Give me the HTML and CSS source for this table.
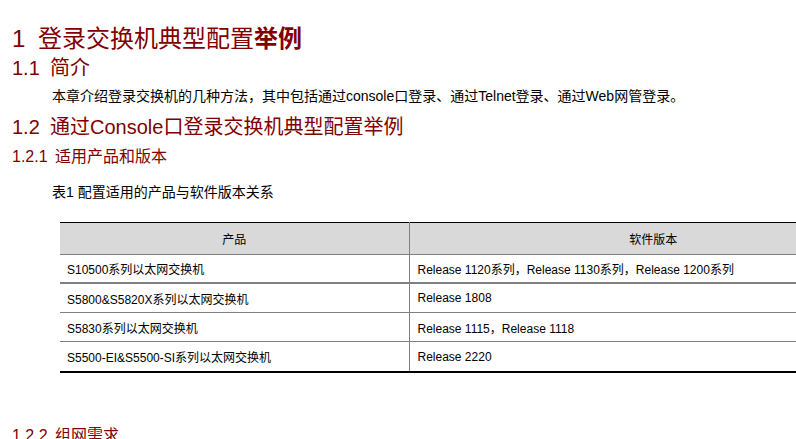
FILE: index.html
```html
<!DOCTYPE html>
<html lang="zh">
<head>
<meta charset="utf-8">
<link rel="stylesheet" href="styles.css">
</head>
<body>
<div class="page">
  <h1 class="h1"><span class="num1">1</span>登录交换机典型配置<b>举例</b></h1>
  <h2 class="h2"><span class="num2">1.1</span>简介</h2>
  <p class="para">本章介绍登录交换机的几种方法，其中包括通过console口登录、通过Telnet登录、通过Web网管登录。</p>
  <h2 class="h2 h2b"><span class="num2b">1.2</span>通过Console口登录交换机典型配置举例</h2>
  <h3 class="h3"><span class="num3">1.2.1</span>适用产品和版本</h3>
  <p class="caption">表1 配置适用的产品与软件版本关系</p>
  <table class="tbl">
    <colgroup><col class="c1"><col class="c2"></colgroup>
    <thead>
      <tr><th>产品</th><th>软件版本</th></tr>
    </thead>
    <tbody>
      <tr class="first"><td>S10500系列以太网交换机</td><td>Release 1120系列，Release 1130系列，Release 1200系列</td></tr>
      <tr><td>S5800&amp;S5820X系列以太网交换机</td><td>Release 1808</td></tr>
      <tr><td>S5830系列以太网交换机</td><td>Release 1115，Release 1118</td></tr>
      <tr class="last"><td>S5500-EI&amp;S5500-SI系列以太网交换机</td><td>Release 2220</td></tr>
    </tbody>
  </table>
  <h3 class="h3 h3b"><span class="num3">1.2.2</span>组网需求</h3>
</div>
</body>
</html>
```

FILE: styles.css
```css
html, body {
  margin: 0;
  padding: 0;
  background: #fff;
  overflow: hidden;
}
body {
  font-family: "Liberation Sans", "Noto Sans CJK SC", sans-serif;
  color: #000;
  width: 796px;
  height: 439px;
}
.page {
  padding-left: 12px;
  overflow: hidden;
  height: 439px;
}
.h1, .h2, .h3 {
  color: #800000;
  font-weight: normal;
  margin: 0;
  white-space: nowrap;
}
.h1 {
  font-size: 24px;
  line-height: 30px;
  padding-top: 24px;
}
.h1 b { font-weight: bold; }
.num1 { display: inline-block; width: 26px; }
.h2 {
  font-size: 20px;
  line-height: 26px;
  margin-top: 1px;
}
.h2b { margin-top: 8px; }
.num2 { display: inline-block; width: 38px; }
.num2b { display: inline-block; width: 38px; }
.para {
  margin: 5px 0 0 40px;
  font-size: 14px;
  line-height: 20px;
  white-space: nowrap;
}
.h3 {
  font-size: 16px;
  line-height: 22px;
  margin-top: 6px;
}
.num3 { display: inline-block; width: 43px; }
.caption {
  margin: 14px 0 0 40px;
  font-size: 14px;
  line-height: 20px;
}
.tbl {
  margin: 20px 0 0 48px;
  border-collapse: collapse;
  table-layout: fixed;
  width: 837px;
  font-size: 12px;
  border-top: 1px solid #000;
  border-bottom: 2px solid #000;
}
.c1 { width: 349px; }
.c2 { width: 488px; }
.tbl th {
  background: #d9d9d9;
  font-weight: normal;
  height: 31px;
  padding: 0;
  text-align: center;
  border-bottom: 1px solid #808080;
}
.tbl th + th, .tbl td + td { border-left: 1px solid #808080; }
.tbl td {
  height: 28px;
  padding: 0 7px 0 7px;
  border-bottom: 1px solid #808080;
  white-space: nowrap;
}
.tbl td + td { padding-left: 8px; }
.tbl tr.first td { border-bottom: 2px solid #808080; height: 27px; }
.tbl tr.last td { border-bottom: 2px solid #000; height: 29px; }
.h3b { margin-top: 52px; }
```
